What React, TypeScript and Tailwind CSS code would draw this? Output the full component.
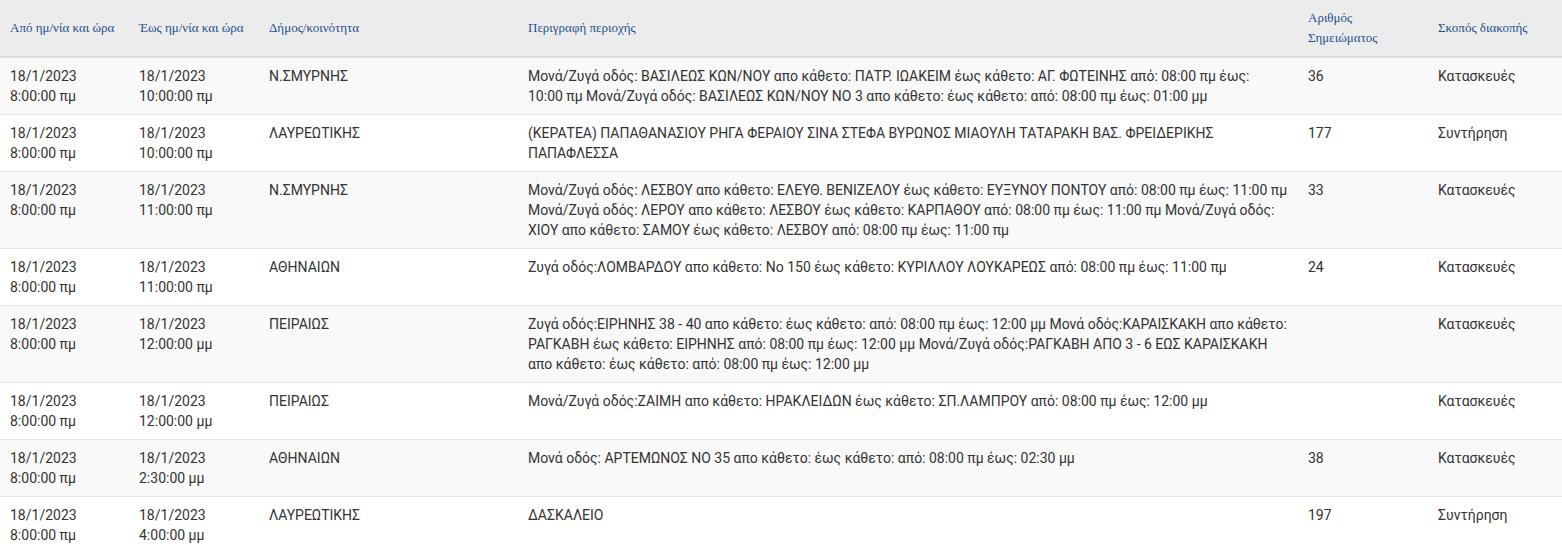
import React from "react";

type Row = {
  from: [string, string];
  to: [string, string];
  dimos: string;
  desc: string;
  num: string;
  purpose: string;
};

const rows: Row[] = [
  {
    from: ["18/1/2023", "8:00:00 πμ"],
    to: ["18/1/2023", "10:00:00 πμ"],
    dimos: "Ν.ΣΜΥΡΝΗΣ",
    desc: "Μονά/Ζυγά οδός: ΒΑΣΙΛΕΩΣ ΚΩΝ/ΝΟΥ απο κάθετο: ΠΑΤΡ. ΙΩΑΚΕΙΜ έως κάθετο: ΑΓ. ΦΩΤΕΙΝΗΣ από: 08:00 πμ έως: 10:00\u00a0πμ Μονά/Ζυγά οδός: ΒΑΣΙΛΕΩΣ ΚΩΝ/ΝΟΥ ΝΟ 3 απο κάθετο: έως κάθετο: από: 08:00 πμ έως: 01:00 μμ",
    num: "36",
    purpose: "Κατασκευές",
  },
  {
    from: ["18/1/2023", "8:00:00 πμ"],
    to: ["18/1/2023", "10:00:00 πμ"],
    dimos: "ΛΑΥΡΕΩΤΙΚΗΣ",
    desc: "(ΚΕΡΑΤΕΑ) ΠΑΠΑΘΑΝΑΣΙΟΥ ΡΗΓΑ ΦΕΡΑΙΟΥ ΣΙΝΑ ΣΤΕΦΑ ΒΥΡΩΝΟΣ ΜΙΑΟΥΛΗ ΤΑΤΑΡΑΚΗ ΒΑΣ. ΦΡΕΙΔΕΡΙΚΗΣ ΠΑΠΑΦΛΕΣΣΑ",
    num: "177",
    purpose: "Συντήρηση",
  },
  {
    from: ["18/1/2023", "8:00:00 πμ"],
    to: ["18/1/2023", "11:00:00 πμ"],
    dimos: "Ν.ΣΜΥΡΝΗΣ",
    desc: "Μονά/Ζυγά οδός: ΛΕΣΒΟΥ απο κάθετο: ΕΛΕΥΘ. ΒΕΝΙΖΕΛΟΥ έως κάθετο: ΕΥΞΥΝΟΥ ΠΟΝΤΟΥ από: 08:00 πμ έως: 11:00 πμ Μονά/Ζυγά οδός: ΛΕΡΟΥ απο κάθετο: ΛΕΣΒΟΥ έως κάθετο: ΚΑΡΠΑΘΟΥ από: 08:00 πμ έως: 11:00 πμ Μονά/Ζυγά οδός: ΧΙΟΥ απο κάθετο: ΣΑΜΟΥ έως κάθετο: ΛΕΣΒΟΥ από: 08:00 πμ έως: 11:00 πμ",
    num: "33",
    purpose: "Κατασκευές",
  },
  {
    from: ["18/1/2023", "8:00:00 πμ"],
    to: ["18/1/2023", "11:00:00 πμ"],
    dimos: "ΑΘΗΝΑΙΩΝ",
    desc: "Ζυγά οδός:ΛΟΜΒΑΡΔΟΥ απο κάθετο: Νο 150 έως κάθετο: ΚΥΡΙΛΛΟΥ ΛΟΥΚΑΡΕΩΣ από: 08:00 πμ έως: 11:00 πμ",
    num: "24",
    purpose: "Κατασκευές",
  },
  {
    from: ["18/1/2023", "8:00:00 πμ"],
    to: ["18/1/2023", "12:00:00 μμ"],
    dimos: "ΠΕΙΡΑΙΩΣ",
    desc: "Ζυγά οδός:ΕΙΡΗΝΗΣ 38 - 40 απο κάθετο: έως κάθετο: από: 08:00 πμ έως: 12:00 μμ Μονά οδός:ΚΑΡΑΙΣΚΑΚΗ απο κάθετο: ΡΑΓΚΑΒΗ έως κάθετο: ΕΙΡΗΝΗΣ από: 08:00 πμ έως: 12:00 μμ Μονά/Ζυγά οδός:ΡΑΓΚΑΒΗ ΑΠΟ 3 - 6 ΕΩΣ ΚΑΡΑΙΣΚΑΚΗ απο κάθετο: έως κάθετο: από: 08:00 πμ έως: 12:00 μμ",
    num: "",
    purpose: "Κατασκευές",
  },
  {
    from: ["18/1/2023", "8:00:00 πμ"],
    to: ["18/1/2023", "12:00:00 μμ"],
    dimos: "ΠΕΙΡΑΙΩΣ",
    desc: "Μονά/Ζυγά οδός:ΖΑΙΜΗ απο κάθετο: ΗΡΑΚΛΕΙΔΩΝ έως κάθετο: ΣΠ.ΛΑΜΠΡΟΥ από: 08:00 πμ έως: 12:00 μμ",
    num: "",
    purpose: "Κατασκευές",
  },
  {
    from: ["18/1/2023", "8:00:00 πμ"],
    to: ["18/1/2023", "2:30:00 μμ"],
    dimos: "ΑΘΗΝΑΙΩΝ",
    desc: "Μονά οδός: ΑΡΤΕΜΩΝΟΣ ΝΟ 35 απο κάθετο: έως κάθετο: από: 08:00 πμ έως: 02:30 μμ",
    num: "38",
    purpose: "Κατασκευές",
  },
  {
    from: ["18/1/2023", "8:00:00 πμ"],
    to: ["18/1/2023", "4:00:00 μμ"],
    dimos: "ΛΑΥΡΕΩΤΙΚΗΣ",
    desc: "ΔΑΣΚΑΛΕΙΟ",
    num: "197",
    purpose: "Συντήρηση",
  },
];

const headers = [
  "Από ημ/νία και ώρα",
  "Έως ημ/νία και ώρα",
  "Δήμος/κοινότητα",
  "Περιγραφή περιοχής",
  "Αριθμός Σημειώματος",
  "Σκοπός διακοπής",
];

export default function App() {
  return (
    <div className="w-[1562px] h-[552px] overflow-hidden bg-white">
      <table className="w-[1562px] table-fixed border-collapse">
        <colgroup>
          <col className="w-[129px]" />
          <col className="w-[130px]" />
          <col className="w-[259px]" />
          <col className="w-[780px]" />
          <col className="w-[130px]" />
          <col className="w-[134px]" />
        </colgroup>
        <thead>
          <tr className="bg-[#ececec] border-b-2 border-[#dddddd]">
            {headers.map((h, i) => (
              <th
                key={i}
                className="h-[56px] pl-[10px] pr-2 py-2 text-left align-middle font-normal text-[13px] leading-5 text-[#1f4f8f] [font-family:'Liberation_Serif',serif]"
              >
                {i === 4 ? (
                  <>
                    Αριθμός
                    <br />
                    Σημειώματος
                  </>
                ) : (
                  h
                )}
              </th>
            ))}
          </tr>
        </thead>
        <tbody className="[font-family:Roboto,sans-serif] text-[14px] leading-5 text-[#333333]">
          {rows.map((r, i) => (
            <tr
              key={i}
              className={`${i % 2 === 0 ? "bg-[#f9f9f9]" : "bg-white"} border-t border-[#e6e6e6]`}
            >
              <td className="pl-[10px] pr-2 py-2 align-top">
                {r.from[0]}
                <br />
                {r.from[1]}
              </td>
              <td className="pl-[10px] pr-2 py-2 align-top">
                {r.to[0]}
                <br />
                {r.to[1]}
              </td>
              <td className="pl-[10px] pr-2 py-2 align-top">{r.dimos}</td>
              <td className="pl-[10px] pr-2 py-2 align-top">{r.desc}</td>
              <td className="pl-[10px] pr-2 py-2 align-top">{r.num}</td>
              <td className="pl-[10px] pr-2 py-2 align-top">{r.purpose}</td>
            </tr>
          ))}
        </tbody>
      </table>
    </div>
  );
}
